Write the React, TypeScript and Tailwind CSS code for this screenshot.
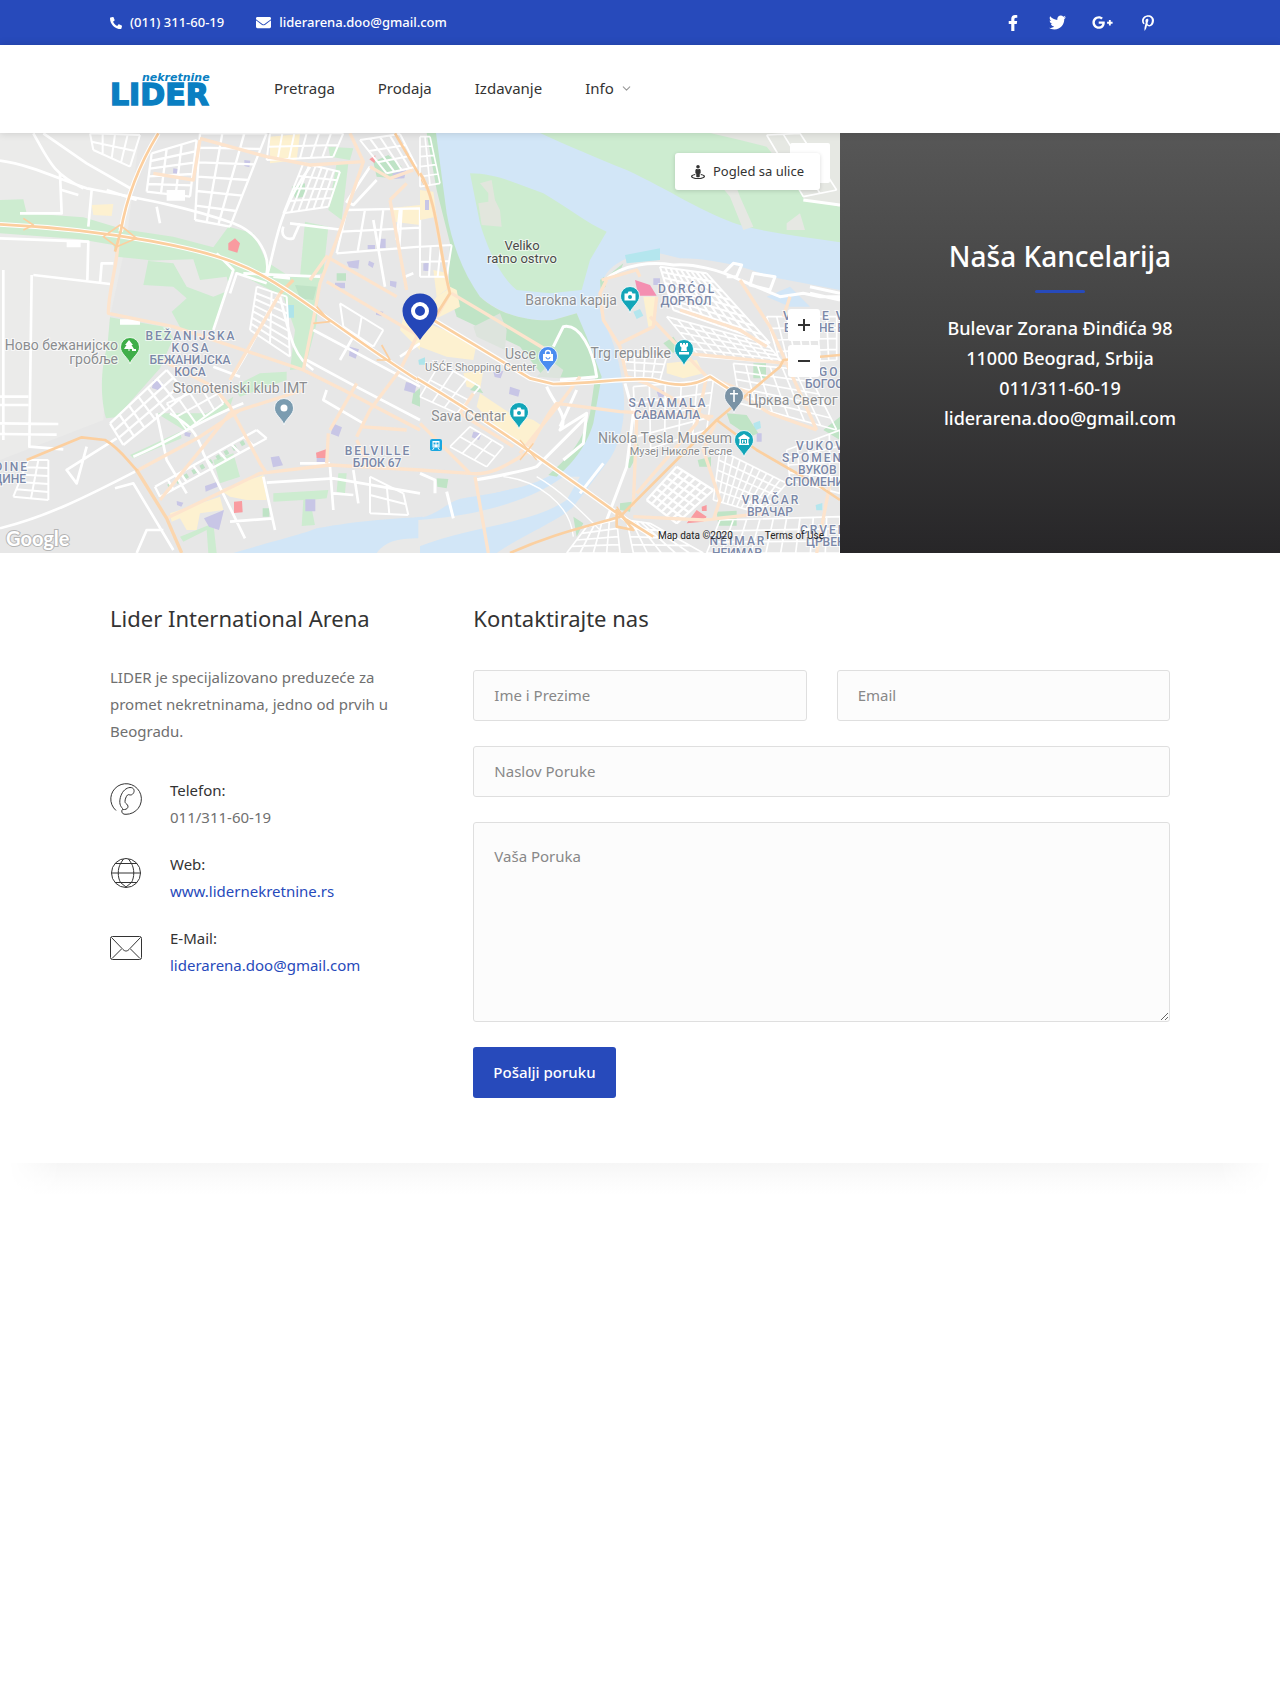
import { useState } from 'react';
import type { FormEvent, ReactNode } from 'react';
import { FaEnvelope, FaFacebookF, FaGooglePlusG, FaPhone, FaPinterestP, FaStreetView, FaTwitter } from 'react-icons/fa';
import { ChevronDown } from 'lucide-react';
import clsx from 'clsx';

const NAV_LINKS = ['Pretraga', 'Prodaja', 'Izdavanje'];

const SOCIALS = [
  { label: 'Facebook', icon: <FaFacebookF size={16} /> },
  { label: 'Twitter', icon: <FaTwitter size={17} /> },
  { label: 'Google Plus', icon: <FaGooglePlusG size={21} /> },
  { label: 'Pinterest', icon: <FaPinterestP size={16} /> },
];

type Point = [number, number];

interface StreetGridProps {
  corners: [Point, Point, Point, Point];
  cols: number;
  rows: number;
  width?: number;
}

// Streets between the four corners of a quarter (clockwise from top left)
function StreetGrid({ corners: [a, b, c, d], cols, rows, width = 6 }: StreetGridProps) {
  const mix = (p: Point, q: Point, t: number) => `${Math.round(p[0] + (q[0] - p[0]) * t)} ${Math.round(p[1] + (q[1] - p[1]) * t)}`;
  const parts: string[] = [];
  for (let i = 0; i <= cols; i++) parts.push(`M${mix(a, b, i / cols)}L${mix(d, c, i / cols)}`);
  for (let j = 0; j <= rows; j++) parts.push(`M${mix(a, d, j / rows)}L${mix(b, c, j / rows)}`);
  return <path d={parts.join('')} fill="none" stroke="#fff" strokeWidth={width} />;
}

function Pin({ x, y, color, children }: { x: number; y: number; color: string; children: ReactNode }) {
  return (
    <g transform={`translate(${x} ${y})`}>
      <path d="M0 17C-2 10-9.5 7-9.5 0a9.5 9.5 0 0 1 19 0C9.5 7 2 10 0 17Z" fill={color} stroke="#fff" strokeWidth="0.8" />
      <g fill="#fff">{children}</g>
    </g>
  );
}

const camera = (
  <>
    <path d="M-5.5-2.5h3l1-2h3l1 2h3v7h-11Z" />
    <circle cy="1" r="2" fill="#12a5b8" />
  </>
);

interface LabelProps {
  x: number;
  y: number;
  anchor?: 'start' | 'middle' | 'end';
  kind?: 'area' | 'cyrillic' | 'place' | 'small';
  children: string;
}

function Label({ x, y, anchor = 'middle', kind = 'area', children }: LabelProps) {
  return (
    <text
      x={x}
      y={y}
      textAnchor={anchor}
      paintOrder="stroke"
      className={clsx(
        'stroke-white/70 stroke-2',
        kind === 'area' && 'fill-[#7b88a8] text-[12px] font-medium tracking-[2px]',
        kind === 'cyrillic' && 'fill-[#7b88a8] text-[12px] font-medium',
        kind === 'place' && 'fill-[#8b8d90] text-[14px]',
        kind === 'small' && 'fill-[#8b8d90] text-[11px]'
      )}
    >
      {children}
    </text>
  );
}

function WestMap() {
  return (
    <g transform="translate(0 -3) scale(.33333)" fill="none" strokeLinejoin="round">
      <path d="M0 0H420L380 330 330 560 310 870 0 990Z" fill="#ebebea" />
      <g fill="#cdecd0">
        <path d="M0 210 70 208 80 250 250 262 370 298 520 320 640 352 685 290 760 310 800 395 870 440 960 440 950 580 915 715 870 720 885 600 850 500 705 425 690 440 640 600 545 600 515 545 560 505 520 470 430 465 445 390 350 380 340 345 240 328 0 310Z" />
        <path d="M330 562 500 592 520 625 480 715 350 862 318 865C298 790 305 700 322 650Z" />
        <path d="M915 275 985 290 970 430 900 440ZM985 50 1060 55 1050 90 990 80ZM1010 100h35l-20 170-40-30ZM470 850 620 850 700 800 690 830 560 905ZM640 990 700 970 720 1040 660 1060ZM820 1090 985 1080 980 1105 930 1110 945 1185 905 1188 910 1110 820 1115ZM1015 1030h25l-5 60-25-5ZM540 1220 640 1180 650 1269H625L620 1200 550 1235ZM390 975 540 905 545 925 400 985ZM700 770 780 730 860 725 860 750 720 800Z" />
      </g>
      <path d="M440 392 580 388 600 450 680 440 690 480 640 500 560 470 520 400Z" fill="#e9e9e8" />
      <g fill="#bfe3c6">
        <path d="M1120 95 1165 75 1205 110 1180 145 1130 140ZM875 170 915 160 915 200 885 205ZM1010 430h28v22h-28ZM885 465 950 470 940 510 900 505ZM788 1135h20v25h-20ZM1240 790l20-15v55l-25-10Z" />
        <path d="M505 1070 735 935" stroke="#bfe3c6" strokeWidth="14" strokeDasharray="12 16" />
      </g>
      <g fill="#fdf1d0">
        <path d="M810 20 900 12 890 90 810 100ZM275 225 340 222 335 258 280 255ZM1170 235 1260 225 1260 285 1180 275ZM660 1080 790 1035 800 1110 740 1110 690 1100ZM510 1150 660 1100 670 1140 600 1150 590 1200 560 1200 540 1165 515 1175ZM1225 510 1260 520V660L1200 600Z" />
      </g>
      <g fill="#c8c6e6">
        <path d="M733 90l18 2-3 20-15-4ZM1178 130l40-10-5 25-35 2ZM1140 326h17v28h-17ZM1103 345h22v13h-22ZM1040 395l38-5-3 26-28-4ZM1107 392l16 8-5 14-14-9ZM1005 458h30v17h-30ZM1170 452l20 3-2 18-18-6ZM1128 542l22 3-4 14-18-5ZM1050 650l27 8-10 28-20-9ZM1218 756l32 6-6 28-32-9ZM460 750l28 8-8 24-24-8ZM998 880l28 12-10 28-23-9ZM812 982l25-4 12 28-30 6ZM553 905l20 4-4 12-15-4ZM615 1068l35-12 3 14-36 15ZM612 1165l60-25-15 60-30-10ZM916 1108h30v36h-30ZM530 1113l20 5-6 12-13-5ZM950 980h30v18h-30ZM1275 400h12v22h-12ZM520 115l16 3-5 14-12-2Z" />
      </g>
      <path d="M685 340 705 325 720 340 712 368 685 360ZM948 968l30-10v26h-28ZM702 1115l24-2 2 34-26 2ZM1108 88l18-12-2 24Z" fill="#f99ba0" />
      <path d="M860 525h22v38h-22ZM1255 690l20-8v22h-18Z" fill="#aee4ea" />
      <path d="M700 1269C850 1225 900 1215 950 1195 1080 1170 1200 1165 1270 1160V1269Z" fill="#d2e6f7" />
      <path d="M1130 1269C1160 1230 1200 1225 1270 1225V1269Z" fill="#e9e9e8" />

      <StreetGrid corners={[[270, 10], [420, 15], [390, 110], [280, 60]]} cols={4} rows={2} />
      <StreetGrid corners={[[455, 70], [590, 30], [570, 200], [440, 185]]} cols={3} rows={5} width={7} />
      <StreetGrid corners={[[600, 10], [800, 10], [690, 290], [585, 270]]} cols={3} rows={6} width={7} />
      <StreetGrid corners={[[910, 100], [1020, 125], [985, 230], [850, 250]]} cols={6} rows={4} />
      <StreetGrid corners={[[810, 10], [1030, 10], [1000, 80], [800, 90]]} cols={6} rows={2} />
      <StreetGrid corners={[[1040, 240], [1260, 235], [1260, 350], [1010, 370]]} cols={4} rows={2} width={7} />
      <StreetGrid corners={[[330, 880], [500, 720], [560, 790], [370, 945]]} cols={6} rows={3} width={7} />
      <StreetGrid corners={[[500, 820], [640, 760], [670, 820], [560, 900]]} cols={4} rows={2} />
      <StreetGrid corners={[[465, 1070], [770, 900], [800, 925], [480, 1100]]} cols={8} rows={1} width={7} />
      <StreetGrid corners={[[770, 470], [860, 500], [870, 680], [750, 600]]} cols={2} rows={7} />
      <StreetGrid corners={[[85, 990], [145, 990], [145, 1110], [40, 1100]]} cols={2} rows={5} />
      <StreetGrid corners={[[1110, 1040], [1210, 1090], [1225, 1155], [1110, 1150]]} cols={2} rows={2} />
      <StreetGrid corners={[[1080, 30], [1200, 12], [1250, 110], [1160, 130]]} cols={4} rows={3} />
      <StreetGrid corners={[[1020, 520], [1150, 600], [1120, 650], [1030, 590]]} cols={2} rows={1} />
      <g stroke="#fff" strokeWidth="8">
        <path d="M0 92C90 105 160 140 260 175 420 205 560 230 700 280 780 310 810 380 800 430M100 10C150 100 160 130 250 175M130 10 260 100 400 180M180 130 185 250 60 250M275 180 265 290M185 180 235 195M0 325 265 335 262 450M100 435 330 462M95 435 88 950 190 958M10 420V930M300 460 305 400 340 400M0 800H85M0 825H85M0 880 175 882M0 912 170 914" />
        <path d="M0 1195C140 1160 260 1100 405 1025M350 925 200 1020 230 1060 260 950M345 1075 400 1060 520 1260M410 1269 440 1200 490 1200M470 850 500 990 560 1090M510 850C560 880 590 900 610 970L735 1225M690 1175 820 1165M790 1040 825 1200M730 820C600 870 520 930 400 980M640 600 700 420 650 370M690 490 710 430 800 460M690 750C760 650 790 560 840 490M800 440C830 340 830 250 930 110M870 280 1030 300M850 290C840 320 860 330 880 325L900 280M730 430 960 440M820 440 870 445" />
        <path d="M800 1058 1000 1045 1260 1090M990 1010 1000 1140M1060 1020 1075 1120M1000 1090 1060 1095M920 690 1050 760 1260 870M840 500C870 620 880 680 940 720M940 600 1260 770M980 780 970 810 1090 880M640 710 720 740M1130 150 1060 225 1040 215 1110 110M1240 430 1215 440M1120 270 1155 470M1190 330 1200 240M1200 680 1260 640M1020 690 1060 620M470 230 480 280M320 180l90 30M900 1000h90" />
      </g>
      <path d="M500 180h55v32h-55ZM200 332h42v20h-42ZM360 568h60v16h-60Z" fill="#fff" />
      <g stroke="#fde4cd" strokeWidth="10">
        <path d="M355 330C350 420 325 480 325 550L520 590 700 650 910 720 1030 780 1260 900M600 25 800 80 930 105 1090 95 1050 10M1090 95 1010 330 960 460 940 570 910 720M930 450 980 380 1190 500M980 455 1260 620M485 690 640 770 690 830 780 1000 800 1030M480 1110 690 850 910 780M1080 890 1220 900M1070 920 1110 840 1200 720 1260 600M415 1020 600 920 720 840M500 1165 780 1030 990 1005 1260 1020M600 30 580 150 460 130M1110 110 1170 145 1240 120M1170 210 1220 160M1170 210 1220 480M990 900 1070 760M1070 930 1110 1010M980 1000 985 910M690 750 840 490" />
        <path d="M410 1020 500 1165 545 1269M840 490 880 450" stroke="#fbd6ae" />
      </g>
      <g stroke="#fff" strokeWidth="14">
        <path d="M0 283C350 300 620 360 720 405 860 460 1000 590 1260 755" />
        <path d="M475 10C420 100 380 200 362 305" />
      </g>
      <g stroke="#fccf9f" strokeWidth="8">
        <path d="M0 283C350 300 620 360 720 405 860 460 1000 590 1260 755M475 10C420 100 380 200 362 305L345 365M1185 10 1290 190M80 990 245 922 315 930C360 955 380 990 412 1022" />
        <path d="M310 320 360 285 410 325 350 350ZM940 580 990 575 950 530M1130 690 1170 690 1145 645M70 265 100 285 70 300" strokeWidth="5" />
      </g>
    </g>
  );
}

function EastMap() {
  return (
    <g transform="translate(420 -3) scale(.33333)" fill="none" strokeLinejoin="round">
      {/* Rivers */}
      <path
        d="M45 9H1260V480L1050 440C950 400 850 385 780 385L700 365C640 375 590 390 560 430 535 470 530 520 548 570 585 640 600 700 610 780 620 860 600 950 560 1000 520 1050 500 1080 460 1130 420 1170 300 1220 230 1269H0V1165C60 1150 90 1110 130 1105 220 1090 350 1075 430 1010 490 960 530 860 535 760L500 640 470 550 400 570C330 575 250 560 180 500 120 420 75 290 75 250Z"
        fill="#d2e6f7"
      />
      <path d="M-5 1170C150 1160 320 1120 430 1040L480 1040 440 1110C340 1180 150 1190-5 1250Z" fill="#e9e9e8" />
      <path d="M110 1130C200 1085 300 1075 400 1050 350 1095 200 1130 110 1130Z" fill="#d2e6f7" />
      <g fill="#cdecd0">
        <path d="M150 130C230 130 300 165 370 190 440 230 500 280 560 305L510 390 485 480 390 490 290 480C240 440 200 350 180 280Z" />
        <path d="M360 9H1260V337C1150 320 1050 310 960 285 850 250 750 180 620 120 520 80 450 50 360 9Z" />
      </g>
      <path d="M20 9H48L80 250C95 340 130 430 180 500 250 565 350 575 400 570L470 550 500 620 545 740 520 880C500 950 450 1010 410 1040L385 1035C450 980 490 930 510 850L525 745 370 740 300 650 110 560 85 480 90 340 50 180Z" fill="#c0e4c6" />
      <path d="M180 160 215 150 225 210 240 240 245 290 185 285 175 220 205 215 205 190Z" fill="#e2e6dd" />
      <path d="M870 9H1260V230L1150 205 1130 150 1080 100 1040 50 960 30ZM830 80 920 90 960 200 1000 290 970 300 930 200ZM1100 280 1140 250 1155 300 1100 300Z" fill="#e6e8e3" />
      <path d="M160 590 240 550 260 600 255 660 170 620ZM370 720 390 690 430 720 420 745 350 740Z" fill="#dde4dd" />
      <path d="M615 375 720 355V390L620 400Z" fill="#b4e6ee" />
      <path d="M640 545l20-8 10 20-20 10ZM1000 880l20-8 3 22-20 8ZM1187 1125l20-6v22h-18Z" fill="#b4e6ee" />
      <path d="M1040 500 1110 470 1170 530 1110 530Z" fill="#d2e6f7" />

      <g fill="#fdf1d0">
        <path d="M0 570 60 560 120 530 110 480 90 470 50 500ZM0 570 170 640 160 690 80 680 0 650ZM40 420 85 430 80 480 50 500ZM0 180 40 185 50 260 0 270ZM180 790 270 850 340 870 370 890 330 950 240 900 170 830ZM740 700 830 690 850 730 790 745 740 730ZM130 730 190 720 180 780 140 770ZM670 500h35v90h-20Z" />
      </g>
      <g fill="#c0e4c6">
        <path d="M1000 700h38v45h-38ZM920 850 980 855 1015 910 990 920 930 880ZM1210 900 1260 860V930ZM890 1145l60-3v45h-55ZM833 990l40-10v30h-35ZM600 1120l35-5-5 30-30-5ZM730 640 760 620 780 650 760 670ZM620 1010 650 930 660 960 630 1015ZM560 440 610 400 600 425 560 450ZM50 1045l35 2-5 28-28-5ZM460 1160l30 20-20 40ZM150 780l20-20 20 30ZM540 450l12-10 5 30-15 10Z" />
      </g>
      <g fill="#c8c6e6">
        <path d="M160 905l25 5-8 20-22-8ZM270 770l30 10-5 20-28-8ZM220 725l30-2-8 22-18-4ZM710 785l20-5 8 15-20 12ZM10 400h18v22h-18ZM15 210h12v30h-12ZM700 445h20v20h-20ZM1010 910h15v25h-15Z" />
      </g>
      <path d="M645 450 690 465 710 497 655 497Z" fill="#f48fb1" />
      <path d="M800 1180 830 1140 860 1160 850 1175ZM845 1130l15-5v18h-14Z" fill="#f99ba0" />

      <StreetGrid corners={[[720, 410], [860, 430], [1050, 640], [760, 540]]} cols={9} rows={8} width={6} />
      <StreetGrid corners={[[740, 560], [1040, 640], [1090, 700], [840, 680]]} cols={9} rows={5} width={5} />
      <StreetGrid corners={[[610, 670], [740, 680], [720, 750], [620, 745]]} cols={4} rows={3} width={5} />
      <StreetGrid corners={[[1040, 560], [1250, 560], [1250, 690], [1080, 700]]} cols={7} rows={4} width={5} />
      <StreetGrid corners={[[940, 700], [1160, 720], [1250, 900], [960, 820]]} cols={6} rows={5} width={5} />
      <StreetGrid corners={[[640, 770], [880, 750], [860, 900], [650, 970]]} cols={5} rows={4} width={5} />
      <StreetGrid corners={[[770, 1010], [880, 1080], [770, 1180], [680, 1110]]} cols={6} rows={6} width={7} />
      <StreetGrid corners={[[900, 960], [1100, 1060], [1020, 1150], [880, 1110]]} cols={10} rows={5} width={5} />
      <StreetGrid corners={[[900, 1170], [1260, 1160], [1260, 1269], [860, 1269]]} cols={9} rows={3} width={5} />
      <StreetGrid corners={[[620, 1170], [690, 1180], [850, 1269], [640, 1269]]} cols={5} rows={4} width={5} />
      <StreetGrid corners={[[500, 1190], [590, 1170], [600, 1269], [440, 1269]]} cols={4} rows={4} width={5} />
      <StreetGrid corners={[[1100, 960], [1260, 900], [1260, 1090], [1110, 1050]]} cols={5} rows={4} width={5} />
      <StreetGrid corners={[[0, 350], [95, 345], [80, 440], [0, 440]]} cols={3} rows={2} />
      <StreetGrid corners={[[0, 20], [30, 20], [60, 160], [0, 170]]} cols={2} rows={5} width={5} />
      <StreetGrid corners={[[60, 700], [180, 770], [110, 850], [0, 800]]} cols={3} rows={2} width={5} />
      <StreetGrid corners={[[150, 890], [250, 950], [200, 1010], [90, 950]]} cols={3} rows={2} width={5} />
      <StreetGrid corners={[[1040, 15], [1140, 10], [1250, 180], [1150, 200]]} cols={2} rows={3} width={5} />
      <g stroke="#fff" strokeWidth="9">
        <path d="M555 450C610 400 700 395 760 405 820 400 900 420 960 450L1080 500 1150 490 1200 500 1260 500M910 430 940 400 965 405 950 440 920 440M1000 430 1065 440 1050 480 990 465ZM400 650 430 590C480 580 520 660 530 740L420 750M380 770C400 820 450 860 420 900L500 850 490 940 430 990M420 890 470 780M0 1030 45 1050V1090M80 1085 100 1165M165 1050C230 1040 320 1020 350 1010L500 860M550 1000 480 1090M615 760 640 850 620 1010 560 1170M1150 210 1260 225M1170 470 1260 490M1170 490 1260 510" />
        <path d="M250 1040C350 1050 450 1120 460 1220M350 1040C420 1080 480 1140 540 1200" strokeWidth="4" />
      </g>
      <g stroke="#fde4cd" strokeWidth="10">
        <path d="M0 130C50 200 60 380 90 490L50 560M95 490 380 660M0 1020 150 1030C220 1040 280 990 320 970 360 900 380 850 410 820L600 845 880 860M165 1040 205 1269M560 450 540 490 550 570 600 650 620 740M545 450 650 420 660 440M600 640 700 590 710 500M690 560 860 740 990 790M800 670 1100 700M860 740 830 880 650 1090M870 740 1050 850 1190 900M640 1160 850 1170 1030 1150M890 870 850 960 900 1110 880 1170M650 870 640 1130M780 540 960 600 1040 650M150 1030 40 920 0 880M300 970 420 820 480 740M160 790 120 850 280 950M960 450 1050 590 1190 900M1090 560 1110 500M620 740 680 760 870 870M1230 1060 1190 1269" />
      </g>
      <g stroke="#fff" strokeWidth="15">
        <path d="M-10 540 330 745 400 762C530 760 640 740 700 750 770 770 820 770 870 740L970 805M-10 745C250 900 450 1050 620 1170L700 1220" />
      </g>
      <g stroke="#fbd0a1">
        <path d="M-10 540 330 745 400 762C530 760 640 740 700 750 770 770 820 770 870 740L970 805M-10 745C250 900 450 1050 620 1170L700 1220M270 1269C400 1210 500 1190 600 1160L890 870 1080 710 1090 690 1260 675M890 870 1010 960 1200 1070 1260 1110M0 130C50 200 60 380 90 490L45 560M590 1140 640 1200 590 1190Z" strokeWidth="8" />
        <path d="M590 1130 640 1200M300 930 350 990M300 990 340 940" strokeWidth="4" />
      </g>
    </g>
  );
}

function CityMap() {
  return (
    <svg
      viewBox="0 0 840 420"
      preserveAspectRatio="xMidYMid slice"
      role="img"
      aria-label="Mapa"
      className="h-full w-full bg-[#e7e7e7] font-['Roboto',sans-serif]"
    >
      <WestMap />
      <EastMap />

      <Label x={118} y={217} anchor="end" kind="place">Ново бежанијско</Label>
      <Label x={118} y={231} anchor="end" kind="place">гробље</Label>
      <Label x={191} y={207}>BEŽANIJSKA</Label>
      <Label x={191} y={219}>KOSA</Label>
      <Label x={190} y={231} kind="cyrillic">БЕЖАНИЈСКА</Label>
      <Label x={190} y={243} kind="cyrillic">КОСА</Label>
      <Label x={240} y={260} kind="place">Stonoteniski klub IMT</Label>
      <Label x={378} y={322}>BELVILLE</Label>
      <Label x={377} y={334} kind="cyrillic">БЛОК 67</Label>
      <Label x={29} y={338} anchor="end">DINE</Label>
      <Label x={26} y={350} anchor="end" kind="cyrillic">ДИНЕ</Label>
      <g className="fill-[#4a4a4a] stroke-white/60 stroke-2 text-[13px]" textAnchor="middle" paintOrder="stroke">
        <text x="522" y="117">Veliko</text>
        <text x="522" y="130">ratno ostrvo</text>
      </g>
      <Label x={617} y={172} anchor="end" kind="place">Barokna kapija</Label>
      <Label x={687} y={160}>DORĆOL</Label>
      <Label x={686} y={172} kind="cyrillic">ДОРЋОЛ</Label>
      <Label x={536} y={226} anchor="end" kind="place">Usce</Label>
      <Label x={536} y={238} anchor="end" kind="small">UŠĆE Shopping Center</Label>
      <Label x={671} y={225} anchor="end" kind="place">Trg republike</Label>
      <Label x={668} y={274}>SAVAMALA</Label>
      <Label x={667} y={286} kind="cyrillic">САВАМАЛА</Label>
      <Label x={506} y={288} anchor="end" kind="place">Sava Centar</Label>
      <Label x={748} y={272} anchor="start" kind="place">Црква Светог</Label>
      <Label x={732} y={310} anchor="end" kind="place">Nikola Tesla Museum</Label>
      <Label x={732} y={322} anchor="end" kind="small">Музеј Николе Тесле</Label>
      <Label x={783} y={187} anchor="start">V</Label>
      <Label x={822} y={187} anchor="start">E V</Label>
      <Label x={784} y={199} anchor="start" kind="cyrillic">Е</Label>
      <Label x={819} y={199} anchor="start" kind="cyrillic">НЕ В</Label>
      <Label x={819} y={243} anchor="start">GOS</Label>
      <Label x={805} y={255} anchor="start" kind="cyrillic">БОГОС</Label>
      <Label x={796} y={317} anchor="start">VUKOV</Label>
      <Label x={782} y={329} anchor="start">SPOMEN</Label>
      <Label x={798} y={341} anchor="start" kind="cyrillic">ВУКОВ</Label>
      <Label x={785} y={353} anchor="start" kind="cyrillic">СПОМЕНИ</Label>
      <Label x={771} y={371}>VRAČAR</Label>
      <Label x={770} y={383} kind="cyrillic">ВРАЧАР</Label>
      <Label x={800} y={401} anchor="start">CRVEN</Label>
      <Label x={806} y={413} anchor="start" kind="cyrillic">ЦРВЕН</Label>
      <Label x={738} y={412}>NEIMAR</Label>
      <Label x={737} y={424} kind="cyrillic">НЕИМАР</Label>

      <Pin x={130} y={214} color="#3fae49">
        <path d="M-1-7 3-2H1.500L4 2H-.5V4H-1.500V2H-6L-3.500-2H-5ZM2 2h4v2H2Z" />
      </Pin>
      <Pin x={284} y={275} color="#7b9cb0">
        <circle r="3.500" />
      </Pin>
      <Pin x={548} y={223} color="#4a8df0">
        <path d="M-5-2H5V5H-5Z" />
        <path d="M-2.500-2v-1a2.500 2.500 0 0 1 5 0v1" fill="none" stroke="#fff" strokeWidth="1.300" />
        <path d="M-2 1a2 2 0 0 0 4 0" fill="none" stroke="#4a8df0" />
      </Pin>
      <Pin x={630} y={163} color="#12a5b8">{camera}</Pin>
      <Pin x={684} y={216} color="#12a5b8">
        <path d="M-4-6h2v1.500h1V-6h2v1.500h1V-6h2v3L2.500-1.500 3 2H-3l.5-3.500L-4-3ZM-5 3H5v2.500H-5Z" />
      </Pin>
      <Pin x={519} y={279} color="#12a5b8">{camera}</Pin>
      <Pin x={734} y={263} color="#7b93a5">
        <path d="M-.8-6H.8v3H4v1.600H.8V6H-.8v-7.400H-4V-3h3.200Z" />
      </Pin>
      <Pin x={744} y={307} color="#12a5b8">
        <path d="M0-6 5.500-2.500V-1h-11v-1.500ZM-5 3.500H5V5H-5ZM-4.500-1H-3v4.500h-1.500ZM3-1h1.500v4.500H3Z" />
        <path d="M-1.500 3V0L0 1.500 1.500 0v3" fill="none" stroke="#fff" />
      </Pin>
      <g transform="translate(436 312)">
        <rect x="-6" y="-6" width="12" height="12" rx="2" fill="#1aa7e0" />
        <path d="M-3.500-4h7v6.500h-7Z" fill="#fff" />
        <path d="M-2.500-2.500h2v2h-2ZM.5-2.500h2v2h-2ZM-2.500.5h1v1h-1ZM1.500.5h1v1h-1Z" fill="#1aa7e0" />
        <path d="M-2 3-3.500 5M2 3 3.500 5" stroke="#fff" />
      </g>

      {/* Office marker */}
      <g transform="translate(420 178)">
        <path d="M0 29C-6 19-17.500 12-17.500 0a17.500 17.500 0 0 1 35 0C17.500 12 6 19 0 29Z" fill="#2447b8" />
        <circle r="7" fill="none" stroke="#fff" strokeWidth="4" />
      </g>

      <text
        x="6"
        y="413"
        paintOrder="stroke"
        className="fill-white stroke-[#b5b5b5] stroke-2 font-['Lato',sans-serif] text-[20px] font-bold"
      >
        Google
      </text>
    </svg>
  );
}

function TopBar() {
  return (
    <div className="bg-[#274abb] text-white">
      <div className="mx-auto flex h-[45px] max-w-[1060px] items-center justify-between">
        <div className="flex items-center gap-8 text-[13px] font-medium">
          <a href="tel:0113116019" className="flex items-center gap-2">
            <FaPhone size={12} className="-scale-x-100" />
            (011) 311-60-19
          </a>
          <a href="mailto:liderarena.doo@gmail.com" className="flex items-center gap-2">
            <FaEnvelope size={15} />
            liderarena.doo@gmail.com
          </a>
        </div>
        <div className="flex items-center">
          {SOCIALS.map(s => (
            <a key={s.label} href="#" aria-label={s.label} className="flex w-[45px] justify-center">
              {s.icon}
            </a>
          ))}
        </div>
      </div>
    </div>
  );
}

function Header() {
  return (
    <header className="relative z-10 bg-white shadow-[0_0_8px_rgba(0,0,0,0.15)]">
      <div className="mx-auto flex h-[88px] max-w-[1060px] items-center">
        <a href="#" aria-label="Lider nekretnine" className="mr-[61px]">
          <svg width="103" height="32" viewBox="0 0 103 32" className="block overflow-visible fill-[#0a7fc2] font-['DejaVu_Sans',sans-serif] font-bold">
            <text x="32" y="8" className="text-[11px] italic">nekretnine</text>
            <text x="0" y="32" className="stroke-[#0a7fc2] stroke-[1.5px] text-[30px]">LIDER</text>
          </svg>
        </a>
        <nav className="flex items-center gap-[43px] pb-0.5 text-[#333]">
          {NAV_LINKS.map(link => (
            <a key={link} href="#">{link}</a>
          ))}
          <a href="#" className="flex items-center gap-1.5">
            Info
            <ChevronDown size={13} className="text-[#999]" />
          </a>
        </nav>
      </div>
    </header>
  );
}

function MapSection() {
  const mapButton = 'flex size-8 items-center justify-center rounded-[3px] bg-white';
  return (
    <section className="flex">
      <div className="relative h-[420px] min-w-0 flex-1 overflow-hidden">
        <CityMap />
        <div className="absolute top-2.5 right-2.5 size-10 rounded-[2px] bg-white" />
        <button type="button" className="absolute top-5 right-5 flex h-[37px] items-center gap-2 rounded-[3px] bg-white px-4 text-[13px] text-[#333] shadow-[0_1px_4px_rgba(0,0,0,0.15)]">
          <FaStreetView size={14} />
          Pogled sa ulice
        </button>
        <div className="absolute top-44 right-5 flex flex-col gap-1">
          <button type="button" aria-label="Uvećaj" className={mapButton}>
            <svg width="12" height="12" viewBox="0 0 12 12" stroke="#333" strokeWidth="2"><path d="M6 0v12M0 6h12" /></svg>
          </button>
          <button type="button" aria-label="Umanji" className={mapButton}>
            <svg width="12" height="12" viewBox="0 0 12 12" stroke="#333" strokeWidth="2"><path d="M0 6h12" /></svg>
          </button>
        </div>
        <div className="absolute right-4 bottom-1 flex gap-8 font-['Roboto',sans-serif] text-[10px] text-[#222]">
          <span>Map data ©2020</span>
          <a href="#">Terms of Use</a>
        </div>
      </div>
      <div className="flex w-[440px] shrink-0 flex-col items-center justify-center bg-linear-to-b from-[#575757] via-[#414141] to-[#272628] pb-4 text-center text-white">
        <h2 className="text-[28px] leading-9 font-medium">Naša Kancelarija</h2>
        <div className="mt-4 mb-5 h-[3px] w-[50px] rounded-full bg-[#274abb]" />
        <address className="text-[18px] leading-[30px] font-medium not-italic">
          Bulevar Zorana Đinđića 98<br />
          11000 Beograd, Srbija<br />
          011/311-60-19<br />
          <a href="mailto:liderarena.doo@gmail.com">liderarena.doo@gmail.com</a>
        </address>
      </div>
    </section>
  );
}

function ContactItem({ icon, label, children }: { icon: ReactNode; label: string; children: ReactNode }) {
  return (
    <li className="flex gap-7">
      <svg width="32" height="32" viewBox="0 0 32 32" fill="none" stroke="#333" strokeWidth="1" className="mt-1.5 shrink-0">
        {icon}
      </svg>
      <div>
        <div className="text-[#333]">{label}</div>
        {children}
      </div>
    </li>
  );
}

function About() {
  return (
    <div className="pr-8">
      <h4 className="mb-[31px] text-[22px] leading-[30px] text-[#333]">Lider International Arena</h4>
      <p>LIDER je specijalizovano preduzeće za promet nekretninama, jedno od prvih u Beogradu.</p>
      <ul className="mt-8 space-y-5">
        <ContactItem
          label="Telefon:"
          icon={
            <path
              d="M6 27.500A15.300 15.300 0 1 1 16 31.300C13 31.500 11.500 30 11.800 27.500 12 26 14 27 16 26.200 18 25.300 18.500 23.500 17.500 22 16.500 20.500 15 20.500 15 18.500 15 16.500 16 13.500 17.500 12 18.500 11 19.500 12.500 21.500 11.800 24.500 10.500 25 6.500 22.500 5 19.500 3.500 15 5.500 12.500 9.500 10 13.500 9 19 10.500 22.500 11.300 24.500 12.500 25 13 26.500"
            />
          }
        >
          011/311-60-19
        </ContactItem>
        <ContactItem
          label="Web:"
          icon={
            <>
              <circle cx="16" cy="16" r="14.500" />
              <path d="M1.500 16h29M10.500 6.500C7.500 12 7.500 20 10.500 25.500M21.500 6.500c3 5.500 3 13.500 0 19M5 6.500h22M5 25.500h22M10.500 6.500 13.500 2M21.500 6.500 18.500 2M10.500 25.500 16 30l5.500-4.500" />
            </>
          }
        >
          <a href="#" className="text-[#274abb]">www.lidernekretnine.rs</a>
        </ContactItem>
        <ContactItem
          label="E-Mail:"
          icon={
            <>
              <rect x=".5" y="5.500" width="31" height="23" rx="2" />
              <path d="M1.500 6.500 13 18.500c2 2 4 2 6 0L30.500 6.500M2 27.500 11.500 18M30 27.500 20.500 18" />
            </>
          }
        >
          <a href="mailto:liderarena.doo@gmail.com" className="text-[#274abb]">liderarena.doo@gmail.com</a>
        </ContactItem>
      </ul>
    </div>
  );
}

const FIELDS = [
  { id: 'name', type: 'text', label: 'Ime i Prezime', className: '' },
  { id: 'email', type: 'email', label: 'Email', className: '' },
  { id: 'subject', type: 'text', label: 'Naslov Poruke', className: 'col-span-2' },
];

const fieldClass = 'block w-full rounded-[3px] border border-[#dfdfdf] bg-[#fcfcfc] px-5 text-[#333] placeholder:text-[#888] outline-none focus:border-[#aaa]';

function ContactForm() {
  const [values, setValues] = useState<Record<string, string>>({});
  const update = (id: string, value: string) => setValues(v => ({ ...v, [id]: value }));
  const handleSubmit = (e: FormEvent) => { e.preventDefault(); setValues({}); };

  return (
    <div className="col-span-2">
      <h4 className="mb-[37px] text-[22px] leading-[30px] text-[#333]">Kontaktirajte nas</h4>
      <form onSubmit={handleSubmit} className="grid grid-cols-2 gap-x-[30px] gap-y-[25px]">
        {FIELDS.map(f => (
          <div key={f.id} className={f.className}>
            <label htmlFor={f.id} className="sr-only">{f.label}</label>
            <input
              id={f.id}
              type={f.type}
              placeholder={f.label}
              value={values[f.id] ?? ''}
              onChange={e => update(f.id, e.target.value)}
              className={clsx(fieldClass, 'h-[51px] pb-0.5')}
            />
          </div>
        ))}
        <div className="col-span-2">
          <label htmlFor="message" className="sr-only">Vaša Poruka</label>
          <textarea
            id="message"
            placeholder="Vaša Poruka"
            value={values.message ?? ''}
            onChange={e => update('message', e.target.value)}
            className={clsx(fieldClass, 'h-[200px] resize-y py-5')}
          />
        </div>
        <button type="submit" className="h-[51px] justify-self-start rounded-[3px] bg-[#274abb] px-5 font-medium text-white">
          Pošalji poruku
        </button>
      </form>
    </div>
  );
}

export default function App() {
  return (
    <div className="bg-white font-['Noto_Sans',sans-serif] text-[15px] leading-[27px] text-[#707070]">
      <TopBar />
      <Header />
      <MapSection />
      <main className="pt-[50px] pb-[65px]">
        <div className="mx-auto grid max-w-[1060px] grid-cols-3 gap-[30px]">
          <About />
          <ContactForm />
        </div>
      </main>
      {/* Soft edge under the page */}
      <div className="h-8 bg-linear-to-b from-[#f6f6f6] via-[#fbfbfb] to-white [mask-image:linear-gradient(to_right,transparent_8px,black_60px,black_calc(100%-60px),transparent_calc(100%-8px))]" />
    </div>
  );
}
